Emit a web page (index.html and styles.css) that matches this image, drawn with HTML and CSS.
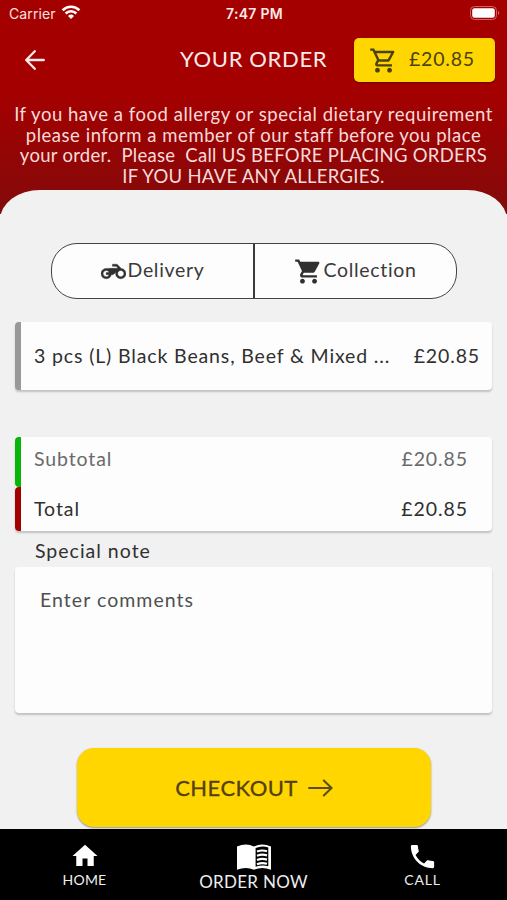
FILE: index.html
```html
<!DOCTYPE html>
<html lang="en">
<head>
<meta charset="utf-8">
<title>Your order</title>
<link rel="stylesheet" href="styles.css">
</head>
<body>
<div class="app">
  <header class="top">
    <div class="status">
      <div class="carrier">Carrier
        <svg width="20" height="15" viewBox="0 0 20 15" fill="none" stroke="#fff" stroke-width="2.6"><path d="M1.6 5.2a12 12 0 0 1 16.8 0M4.6 8.5a7.7 7.7 0 0 1 10.8 0"/><path d="M10 14l-3-3.1a4.3 4.3 0 0 1 6 0z" fill="#fff" stroke="none"/></svg>
      </div>
      <div class="clock">7:47 PM</div>
      <div class="battery"><svg width="30" height="14" viewBox="0 0 30 14"><rect x=".5" y=".5" width="26" height="13" rx="4" fill="none" stroke="#c66"/><rect x="2.2" y="2.2" width="22.6" height="9.6" rx="2.3" fill="#fff"/><path d="M28 4.8q2.6 2.2 0 4.4z" fill="#c66"/></svg></div>
    </div>
    <div class="bar">
      <svg class="back" width="20" height="20" viewBox="0 0 20 20" fill="none" stroke="#fbeaea" stroke-width="2.3" stroke-linecap="round" stroke-linejoin="round"><path d="M9.8 1.2L1.2 10l8.6 8.8M1.5 10h17.3"/></svg>
      <h1 class="title">YOUR ORDER</h1>
      <div class="basket">
        <svg width="29" height="29" viewBox="0 0 24 24" fill="#4b4210"><path d="M15.55 13c.75 0 1.41-.41 1.75-1.03l3.58-6.49c.37-.66-.11-1.48-.87-1.48H5.21l-.94-2H1v2h2l3.6 7.59-1.35 2.44C4.52 15.37 5.48 17 7 17h12v-2H7l1.1-2h7.45zM6.16 6h12.15l-2.76 5H8.53L6.16 6zM7 18c-1.1 0-1.99.9-1.99 2S5.9 22 7 22s2-.9 2-2-.9-2-2-2zm10 0c-1.1 0-1.99.9-1.99 2s.89 2 1.99 2 2-.9 2-2-.9-2-2-2z"/></svg>
        <span>£20.85</span>
      </div>
    </div>
    <p class="notice"><span>If you have a food allergy or special dietary requirement</span><span>please inform a member of our staff before you place</span><span class="tight">your order.  Please  Call US BEFORE PLACING ORDERS</span><span class="tight">IF YOU HAVE ANY ALLERGIES.</span></p>
  </header>
  <main class="sheet">
    <div class="modes">
      <div class="mode"><svg width="25" height="25" viewBox="0 0 24 24" fill="#303030"><path d="M19.44 9.03L15.41 5H11v2h3.59l2 2H5c-2.8 0-5 2.2-5 5s2.2 5 5 5c2.46 0 4.45-1.69 4.9-4h1.65l2.77-2.77c-.21.54-.32 1.14-.32 1.77 0 2.8 2.2 5 5 5s5-2.2 5-5c0-2.65-1.97-4.77-4.56-4.97zM7.82 15C7.4 16.15 6.28 17 5 17c-1.63 0-3-1.37-3-3s1.37-3 3-3c1.28 0 2.4.85 2.82 2H5v2h2.82zM19 17c-1.66 0-3-1.34-3-3s1.34-3 3-3 3 1.34 3 3-1.34 3-3 3z" stroke="#303030" stroke-width=".4"/><path d="M8 9h9l-4.5 5.5H10z"/></svg><span>Delivery</span></div>
      <div class="mode"><svg width="29" height="29" viewBox="0 0 24 24" fill="#303030"><path d="M7 18c-1.1 0-1.99.9-1.99 2S5.9 22 7 22s2-.9 2-2-.9-2-2-2zM1 2v2h2l3.6 7.59-1.35 2.45c-.16.28-.25.61-.25.96 0 1.1.9 2 2 2h12v-2H7.42c-.14 0-.25-.11-.25-.25l.03-.12.9-1.63h7.45c.75 0 1.41-.41 1.75-1.03l3.58-6.49c.08-.14.12-.31.12-.48 0-.55-.45-1-1-1H5.21l-.94-2H1zm16 16c-1.1 0-1.99.9-1.99 2s.89 2 1.99 2 2-.9 2-2-.9-2-2-2z"/></svg><span>Collection</span></div>
    </div>
    <section class="card item"><span>3 pcs (L) Black Beans, Beef &amp; Mixed ...</span><span>£20.85</span></section>
    <section class="card totals">
      <div class="row sub"><span>Subtotal</span><span>£20.85</span></div>
      <div class="row total"><span>Total</span><span>£20.85</span></div>
    </section>
    <div class="label">Special note</div>
    <div class="card note">Enter comments</div>
    <div class="checkout"><span>CHECKOUT</span><svg width="25" height="18" viewBox="0 0 25 18" fill="none" stroke="#5a4d16" stroke-width="2" stroke-linecap="round" stroke-linejoin="round"><path d="M1 9h22.5M15.8 1.5L23.6 9l-7.8 7.5"/></svg></div>
  </main>
  <nav class="tabs">
    <div class="tab"><svg width="30" height="30" viewBox="0 0 24 24" fill="#fff"><path d="M10 20v-6h4v6h5v-8h3L12 3 2 12h3v8z"/></svg><span>HOME</span></div>
    <div class="tab active"><svg width="36" height="30" viewBox="0 0 36 30"><path d="M1 4.5Q10 .3 18 4.5q8-4.2 17 0v23.3q-9-3.6-17 0-8-3.6-17 0z" fill="#fff"/><path d="M19.6 6q6.5-2.8 12.7-.5v18.7q-6.2-1.8-12.7.6z" fill="#000"/><path d="M21 9.6q5-2 10-.4M21 13.8q5-2 10-.4M21 18q5-2 10-.4M21 22.2q5-2 10-.4" fill="none" stroke="#fff" stroke-width="2.2"/></svg><span>ORDER NOW</span></div>
    <div class="tab"><svg width="31" height="31" viewBox="0 0 24 24" fill="#fff"><path d="M6.62 10.79c1.44 2.83 3.76 5.14 6.59 6.59l2.2-2.2c.27-.27.67-.36 1.02-.24 1.12.37 2.33.57 3.57.57.55 0 1 .45 1 1V20c0 .55-.45 1-1 1-9.39 0-17-7.61-17-17 0-.55.45-1 1-1h3.5c.55 0 1 .45 1 1 0 1.25.2 2.45.57 3.57.11.35.03.74-.25 1.02l-2.2 2.2z"/></svg><span>CALL</span></div>
  </nav>
</div>
</body>
</html>
```
FILE: styles.css
```css
* { box-sizing: border-box; }
body { margin: 0; background: #f1f1f1; font: 19.5px/24px Lato, sans-serif; color: #3a3a3a; letter-spacing: .8px; }
svg { display: block; flex: none; }
.app { height: 900px; display: flex; flex-direction: column; overflow: hidden; }

.top { height: 214px; flex: none; background: linear-gradient(#a50000 0 90px, #830a0a 214px); color: #fff; }
.status { height: 28px; padding: 0 7px 0 9px; display: grid; grid-template-columns: 1fr auto 1fr; align-items: center; font: 14px/28px Inter, sans-serif; letter-spacing: 0; }
.carrier { display: flex; align-items: center; gap: 5px; color: #f6e0e0; letter-spacing: .1px; }
.carrier svg { margin-top: -3px; }
.clock { font-weight: 600; letter-spacing: .3px; color: #fbeaea; }
.battery { justify-self: end; margin-top: -2px; }
.bar { height: 63px; padding: 10px 12px 9px 25px; display: flex; align-items: center; }
.title { margin: -3px 0 0 135px; font-size: 22px; font-weight: 400; letter-spacing: .65px; color: #fbeaea; white-space: nowrap; }
.basket { width: 141px; height: 44px; margin-left: auto; padding-left: 15px; display: flex; align-items: center; gap: 11px; border-radius: 5px; background: #ffd600; color: #4b4210; box-shadow: 0 1px 2px rgba(0,0,0,.35); }
.basket span, .mode span { margin-top: -2px; }
.notice { margin: 13px 0 0; font-size: 18.5px; line-height: 20.7px; letter-spacing: .53px; text-align: center; color: #f8dada; }
.notice span { display: block; white-space: pre; }
.notice .tight { letter-spacing: .28px; }

.sheet { height: 639px; flex: none; margin-top: -24px; padding: 53px 15px 0; border-radius: 40px 40px 0 0 / 30px 30px 0 0; background: #f1f1f1; }
.modes { width: 406px; height: 56px; margin-left: 36px; display: flex; border: 1px solid #444; border-radius: 26px; background: #fdfdfd; letter-spacing: .68px; }
.mode { flex: 1; display: flex; align-items: center; justify-content: center; gap: 2px; }
.mode + .mode { border-left: 2px solid #3a3a3a; gap: 0; }
.card { background: #fdfdfd; border-radius: 4px; box-shadow: 0 2px 2px rgba(0,0,0,.2); }
.item { height: 68px; margin-top: 23px; padding: 0 12px 0 13px; display: flex; align-items: center; justify-content: space-between; border-left: 6px solid #999; white-space: nowrap; color: #303030; letter-spacing: .86px; }
.totals { height: 94px; margin-top: 47px; }
.row { display: flex; align-items: center; justify-content: space-between; padding: 0 24px 0 13px; border-left: 6px solid; border-radius: 4px 0 0 4px; }
.row span { color: #303030; }
.sub { height: 50px; padding-bottom: 6px; border-color: #06b70a; letter-spacing: .9px; }
.row.sub span { color: #6a6a6a; }
.total { height: 44px; border-color: #a50000; letter-spacing: .95px; }
.label { height: 36px; padding: 8px 0 0 20px; color: #303030; letter-spacing: 1px; }
.note { height: 146px; padding: 21px 25px; color: #505050; letter-spacing: 1.05px; }
.checkout { width: 354px; height: 79px; margin: 35px 0 0 62px; display: flex; align-items: center; justify-content: center; gap: 10px; border-radius: 17px; background: #ffd600; box-shadow: 0 1px 2px rgba(0,0,0,.4); color: #54400f; font-size: 22px; letter-spacing: .45px; -webkit-text-stroke: .3px; }

.tabs { flex: 1; display: grid; grid-template-columns: repeat(3, 1fr); background: #000; color: #eee; font-size: 14px; letter-spacing: .2px; }
.tab { display: flex; flex-direction: column; align-items: center; padding-top: 12px; }
.tab span { line-height: 18px; }
.tab:last-child { letter-spacing: .8px; }
.tab:last-child span { margin-top: -1px; }
.tab.active { font-size: 17px; letter-spacing: .3px; padding-top: 13px; }
.tab.active span { line-height: 20px; }
```
